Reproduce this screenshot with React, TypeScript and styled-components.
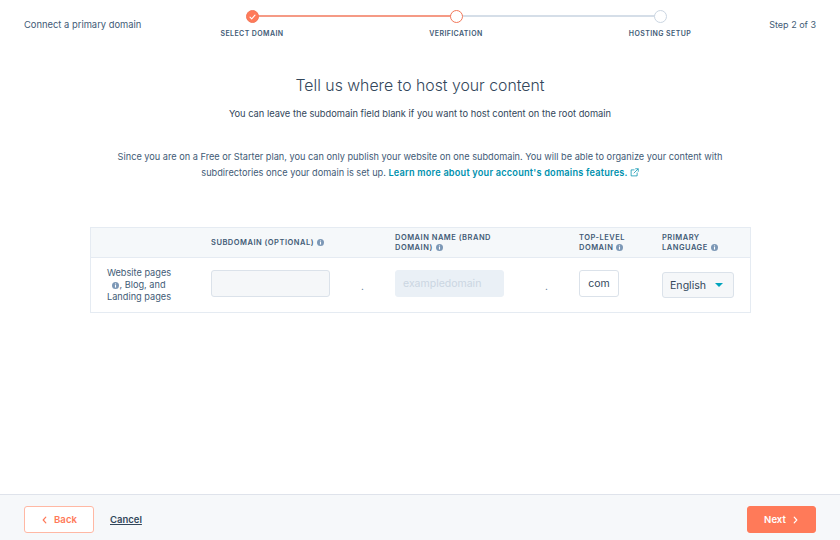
import React, { FC } from 'react';
import styled, { createGlobalStyle } from 'styled-components';

const GlobalStyle = createGlobalStyle`
    html, body {
        margin: 0;
        padding: 0;
        background: #ffffff;
    }
    body {
        font-family: "Inter", "Liberation Sans", sans-serif;
        color: #33475b;
    }
`;

const Page = styled.div`
    position: relative;
    width: 840px;
    height: 540px;
    display: flex;
    flex-direction: column;
    overflow: hidden;
`;

const TopBar = styled.div`
    height: 48px;
    padding: 0 24px;
    display: flex;
    justify-content: space-between;
`;

const TopText = styled.span`
    font-size: 9.4px;
    line-height: 14px;
    margin-top: 18px;
    color: #425b76;
`;

const StepCount = styled(TopText)`
    font-size: 9px;
`;

const Stepper = styled.div`
    position: absolute;
    top: 10px;
    left: 150px;
    display: flex;
`;

const Step = styled.div<{ $line?: 'done' | 'todo'; $lineLeft?: 'done' | 'todo' }>`
    position: relative;
    width: 204px;
    display: flex;
    flex-direction: column;
    align-items: center;

    &::before {
        content: '';
        display: ${p => (p.$lineLeft ? 'block' : 'none')};
        position: absolute;
        top: 5px;
        left: 0;
        width: 50%;
        height: 2px;
        background: ${p => (p.$lineLeft === 'done' ? '#f59a85' : '#d5dee8')};
    }
    &::after {
        content: '';
        display: ${p => (p.$line ? 'block' : 'none')};
        position: absolute;
        top: 5px;
        left: 50%;
        width: 50%;
        height: 2px;
        background: ${p => (p.$line === 'done' ? '#f59a85' : '#d5dee8')};
    }
`;

const Circle = styled.span<{ $state: 'done' | 'active' | 'todo' }>`
    position: relative;
    z-index: 1;
    box-sizing: border-box;
    width: 13px;
    height: 13px;
    border-radius: 50%;
    display: flex;
    align-items: center;
    justify-content: center;
    background: ${p => (p.$state === 'done' ? '#ff7a59' : '#ffffff')};
    border: 1.5px solid ${p => (p.$state === 'todo' ? '#cbd6e2' : '#f2785a')};
`;

const StepLabel = styled.span`
    margin-top: 6px;
    font-size: 7px;
    line-height: 10px;
    font-weight: 600;
    letter-spacing: 0.4px;
    color: #425b76;
`;

const Content = styled.main`
    flex: 1;
    display: flex;
    flex-direction: column;
    align-items: center;
`;

const Title = styled.h1`
    margin: 27px 0 0;
    font-size: 15.8px;
    line-height: 22px;
    font-weight: 300;
    color: #33475b;
`;

const Sub = styled.p`
    margin: 9px 0 0;
    font-size: 9.3px;
    line-height: 16px;
    color: #33475b;
`;

const Notice = styled.p`
    margin: 27px 0 0;
    width: 640px;
    text-align: center;
    font-size: 9.2px;
    line-height: 16px;
    color: #425b76;
`;

const LearnLink = styled.a`
    color: #0091ae;
    font-weight: 600;
    letter-spacing: 0.2px;
    text-decoration: none;
`;

const Table = styled.div`
    margin: 46px 0 0 1px;
    width: 661px;
    box-sizing: border-box;
    border: 1px solid #e5ebf2;
    display: grid;
    grid-template-columns: 120px 184px 184px 83px 88px;
`;

const HeadCell = styled.div`
    height: 30px;
    padding-top: 1px;
    box-sizing: border-box;
    background: #f5f8fa;
    border-bottom: 1px solid #e5ebf2;
    display: flex;
    align-items: center;
    font-size: 7.5px;
    line-height: 10px;
    font-weight: 600;
    letter-spacing: 0.5px;
    color: #425b76;
`;

const HeadText = styled.span<{ $width?: number }>`
    display: block;
    max-width: ${p => (p.$width ? `${p.$width}px` : 'none')};
`;

const RowLabel = styled.div`
    height: 54px;
    padding: 0 24px 0 0;
    box-sizing: border-box;
    display: flex;
    flex-direction: column;
    align-items: center;
    justify-content: center;
    font-size: 9.2px;
    line-height: 12px;
    color: #425b76;
`;

const LabelLine = styled.span`
    display: flex;
    align-items: center;
`;

const FieldCell = styled.div`
    height: 54px;
    display: flex;
    align-items: flex-start;
    padding-top: 12px;
    box-sizing: border-box;
`;

const Field = styled.div<{ $width: number; $disabled?: boolean }>`
    width: ${p => p.$width}px;
    height: 27px;
    box-sizing: border-box;
    padding-left: ${p => (p.$disabled ? 7 : 0)}px;
    border-radius: 3px;
    border: 1px solid ${p => (p.$disabled ? '#eaf0f6' : '#dbe2ea')};
    background: ${p => (p.$disabled ? '#eaf0f6' : '#ffffff')};
    display: flex;
    align-items: center;
    justify-content: ${p => (p.$disabled ? 'flex-start' : 'center')};
    font-size: 10.5px;
    color: ${p => (p.$disabled ? '#cbd6e2' : '#33475b')};
`;

const SubdomainField = styled(Field)`
    background: #f5f7f9;
`;

const Dot = styled.span<{ $gap: number }>`
    margin: 9px 0 0 ${p => p.$gap}px;
    font-size: 10px;
    line-height: 14px;
    color: #516f90;
`;

const Select = styled.div`
    margin-top: 2px;
    width: 72px;
    height: 26px;
    box-sizing: border-box;
    border: 1px solid #dbe2ea;
    border-radius: 3px;
    background: #f5f7f9;
    padding: 0 10px 0 7px;
    display: flex;
    align-items: center;
    justify-content: space-between;
    font-size: 10.6px;
    color: #33475b;
`;

const Caret = styled.span`
    width: 0;
    height: 0;
    border-left: 4.5px solid transparent;
    border-right: 4.5px solid transparent;
    border-top: 4.5px solid #00a4bd;
`;

const Footer = styled.footer`
    height: 46px;
    box-sizing: border-box;
    background: #f6f8fa;
    border-top: 1px solid #dfe3eb;
    padding: 11px 24px 0;
    display: flex;
    align-items: flex-start;
`;

const Button = styled.button<{ $primary?: boolean }>`
    height: 27px;
    box-sizing: border-box;
    border-radius: 3px;
    border: 1px solid ${p => (p.$primary ? '#ff7a59' : '#ffb8a4')};
    background: ${p => (p.$primary ? '#ff7a59' : '#ffffff')};
    color: ${p => (p.$primary ? '#ffffff' : '#ff7a59')};
    font-family: inherit;
    font-size: 9.6px;
    font-weight: 600;
    display: flex;
    align-items: center;
    justify-content: center;
    gap: 6px;
    padding: 0;
`;

const BackButton = styled(Button)`
    width: 70px;
`;

const NextButton = styled(Button)`
    width: 69px;
    margin-left: auto;
`;

const CancelLink = styled.a`
    margin: 7px 0 0 16px;
    font-size: 9.5px;
    line-height: 14px;
    font-weight: 600;
    color: #33475b;
    text-decoration: underline;
`;

const InfoDot = styled.svg<{ $noGap?: boolean }>`
    flex: none;
    width: 7px;
    height: 7px;
    margin-left: ${p => (p.$noGap ? 0 : 3)}px;
    vertical-align: -0.5px;
`;

const ExternalIcon = styled.svg`
    width: 9px;
    height: 9px;
    margin-left: 2px;
    vertical-align: -0.5px;
`;

const Info: FC<{ noGap?: boolean }> = ({ noGap }) => (
    <InfoDot viewBox="0 0 10 10" $noGap={noGap}>
        <circle cx="5" cy="5" r="5" fill="#7c98b6" />
        <rect x="4.2" y="4.3" width="1.6" height="3.6" fill="#ffffff" />
        <rect x="4.2" y="2.1" width="1.6" height="1.4" fill="#ffffff" />
    </InfoDot>
);

const Chevron: FC<{ left?: boolean }> = ({ left }) => (
    <svg width="7" height="8" viewBox="0 0 7 8" fill="none">
        <path
            d={left ? 'M4.8 1.2 2.2 4l2.6 2.8' : 'M2.2 1.2 4.8 4 2.2 6.8'}
            stroke="currentColor"
            strokeWidth="1.2"
            strokeLinecap="round"
            strokeLinejoin="round"
        />
    </svg>
);

const App: FC = () => {
    return (
        <Page>
            <GlobalStyle />
            <TopBar>
                <TopText>Connect a primary domain</TopText>
                <Stepper>
                    <Step $line="done">
                        <Circle $state="done">
                            <svg width="7" height="6" viewBox="0 0 7 6" fill="none">
                                <path d="M1 3.2 2.7 4.8 6 1.2" stroke="#ffffff" strokeWidth="1.1" strokeLinecap="round" strokeLinejoin="round" />
                            </svg>
                        </Circle>
                        <StepLabel>SELECT DOMAIN</StepLabel>
                    </Step>
                    <Step $lineLeft="done" $line="todo">
                        <Circle $state="active" />
                        <StepLabel>VERIFICATION</StepLabel>
                    </Step>
                    <Step $lineLeft="todo">
                        <Circle $state="todo" />
                        <StepLabel>HOSTING SETUP</StepLabel>
                    </Step>
                </Stepper>
                <StepCount>Step 2 of 3</StepCount>
            </TopBar>
            <Content>
                <Title>Tell us where to host your content</Title>
                <Sub>You can leave the subdomain field blank if you want to host content on the root domain</Sub>
                <Notice>
                    Since you are on a Free or Starter plan, you can only publish your website on one subdomain. You will be able to organize your content with subdirectories once your domain is set up.{' '}
                    <LearnLink>Learn more about your account's domains features.</LearnLink>
                    <ExternalIcon viewBox="0 0 12 12" fill="none" stroke="#0091ae" strokeWidth="1">
                        <path d="M6 2.5H1.5v8h8V6M7 1h4v4M11 1 5 7" />
                    </ExternalIcon>
                </Notice>
                <Table>
                    <HeadCell />
                    <HeadCell>
                        <HeadText>SUBDOMAIN (OPTIONAL)<Info /></HeadText>
                    </HeadCell>
                    <HeadCell>
                        <HeadText $width={125}>DOMAIN NAME (BRAND DOMAIN)<Info /></HeadText>
                    </HeadCell>
                    <HeadCell>
                        <HeadText $width={60}>TOP-LEVEL DOMAIN<Info /></HeadText>
                    </HeadCell>
                    <HeadCell>
                        <HeadText $width={60}>PRIMARY LANGUAGE<Info /></HeadText>
                    </HeadCell>

                    <RowLabel>
                        <LabelLine>Website pages</LabelLine>
                        <LabelLine><Info noGap />, Blog, and</LabelLine>
                        <LabelLine>Landing pages</LabelLine>
                    </RowLabel>
                    <FieldCell>
                        <SubdomainField $width={119} />
                        <Dot $gap={31}>.</Dot>
                    </FieldCell>
                    <FieldCell>
                        <Field $width={109} $disabled>exampledomain</Field>
                        <Dot $gap={41}>.</Dot>
                    </FieldCell>
                    <FieldCell>
                        <Field $width={40}>com</Field>
                    </FieldCell>
                    <FieldCell>
                        <Select>
                            English
                            <Caret />
                        </Select>
                    </FieldCell>
                </Table>
            </Content>
            <Footer>
                <BackButton><Chevron left /> Back</BackButton>
                <CancelLink>Cancel</CancelLink>
                <NextButton $primary>Next <Chevron /></NextButton>
            </Footer>
        </Page>
    );
};

export default App;
